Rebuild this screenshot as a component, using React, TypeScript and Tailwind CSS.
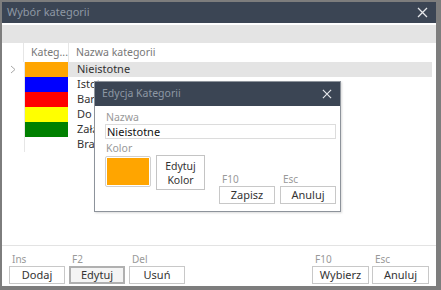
import React from "react";

const font = { fontFamily: '"Segoe UI", "Noto Sans", "Open Sans", sans-serif' };

function CloseX({ size = 11 }: { size?: number }) {
  return (
    <svg width={size} height={size} viewBox="0 0 11 11">
      <path d="M1 1 L10 10 M10 1 L1 10" stroke="#e6e8eb" strokeWidth="1.3" fill="none" />
    </svg>
  );
}

function Btn({ label, w, focused }: { label: string; w: string; focused?: boolean }) {
  return (
    <div
      className={`${w} h-[18px] flex items-center justify-center text-[11px] text-[#333] ${
        focused ? "border-2 border-[#b0b0b0] bg-[#f4f4f4]" : "border border-[#c8c8c8] bg-white"
      }`}
    >
      {label}
    </div>
  );
}

function KeyBtn({ k, label, w, focused }: { k: string; label: string; w: string; focused?: boolean }) {
  return (
    <div className="flex flex-col">
      <div className="text-[10px] leading-[12px] text-[#999] pl-[3px] h-[13px]">{k}</div>
      <Btn label={label} w={w} focused={focused} />
    </div>
  );
}

const rows = [
  { c: "#ffa500", t: "Nieistotne", sel: true },
  { c: "#0000ff", t: "Istot" },
  { c: "#ff0000", t: "Bard" },
  { c: "#ffff00", t: "Do z" },
  { c: "#008000", t: "Załą" },
  { c: "#ffffff", t: "Brak" },
];

export default function App() {
  return (
    <div className="relative w-[441px] h-[290px] bg-[#7d7d7d] pl-[2px] pt-[2px] pr-[5px] pb-[4px]" style={font}>
      <div className="w-full h-full bg-white flex flex-col">
        {/* title bar */}
        <div className="h-[21px] bg-[#3b4554] flex items-center justify-between pl-[5px] pr-[8px]">
          <span className="text-[11px] text-[#8e98a4]">Wybór kategorii</span>
          <CloseX size={11} />
        </div>
        <div className="h-[2px] bg-white" />
        <div className="h-[18px] bg-[#e4e4e4]" />
        {/* grid */}
        <div className="flex-1 flex flex-col">
          <div className="h-[19px] flex text-[10.5px] text-[#777] items-center">
            <div className="w-[21px] h-full" />
            <div className="w-[45px] h-full border-l border-[#e6e6e6] flex items-center pl-[7px]">Kateg...</div>
            <div className="flex-1 h-full border-l border-[#e6e6e6] flex items-center pl-[7px]">Nazwa kategorii</div>
          </div>
          {rows.map((r, i) => (
            <div key={i} className="h-[15px] flex">
              <div className="w-[22px] flex items-center justify-center">
                {r.sel ? (
                  <svg width="6" height="9" viewBox="0 0 6 9">
                    <path d="M1 1 L5 4.5 L1 8" stroke="#a8a8a8" strokeWidth="1" fill="none" />
                  </svg>
                ) : null}
              </div>
              <div className="w-[44px] border-l border-[#e6e6e6]" style={{ backgroundColor: r.c }} />
              <div
                className={`flex-1 flex items-center pl-[9px] text-[11px] text-[#333] mr-[4px] ${
                  r.sel ? "bg-[#e4e4e4]" : ""
                }`}
              >
                {r.t}
              </div>
            </div>
          ))}
          <div className="flex-1" />
        </div>
        {/* bottom bar */}
        <div className="h-[41px] border-t border-[#e3e3e3] flex items-start pt-[7px] px-[7px] justify-between">
          <div className="flex gap-[4px]">
            <KeyBtn k="Ins" label="Dodaj" w="w-[56px]" />
            <KeyBtn k="F2" label="Edytuj" w="w-[56px]" focused />
            <KeyBtn k="Del" label="Usuń" w="w-[56px]" />
          </div>
          <div className="flex gap-[3px]">
            <KeyBtn k="F10" label="Wybierz" w="w-[57px]" />
            <KeyBtn k="Esc" label="Anuluj" w="w-[57px]" />
          </div>
        </div>
      </div>

      {/* edit dialog */}
      <div className="absolute left-[94px] top-[81px] w-[247px] h-[131px] border border-[#8d939b] bg-white flex flex-col shadow-[1px_1px_2px_rgba(0,0,0,0.15)]">
        <div className="h-[24px] bg-[#3b4554] flex items-center justify-between pl-[7px] pr-[8px]">
          <span className="text-[10.5px] text-[#8e98a4]">Edycja Kategorii</span>
          <CloseX size={10} />
        </div>
        <div className="flex-1 pl-[10px] pr-[4px] pt-[5px] flex flex-col">
          <div className="text-[10.5px] leading-[13px] text-[#999] pl-[1px]">Nazwa</div>
          <div className="h-[15px] border border-[#dcdcdc] text-[11px] leading-[13px] text-[#111] pl-[1px] flex items-center">
            Nieistotne
          </div>
          <div className="text-[10.5px] leading-[13px] text-[#999] pl-[1px] mt-[3px]">Kolor</div>
          <div className="flex items-start">
            <div className="w-[46px] h-[31px] border border-[#d0d0d0] p-[1px] bg-white rounded-[2px] mt-[1px]">
              <div className="w-full h-full bg-[#ffa500]" />
            </div>
            <div className="ml-[5px] w-[49px] h-[35px] border border-[#c4c4c4] flex flex-col items-center justify-center text-[10.5px] leading-[14px] text-[#333]">
              <span>Edytuj</span>
              <span>Kolor</span>
            </div>
            <div className="flex-1 flex justify-end gap-[5px] mt-[18px]">
              <KeyBtn k="F10" label="Zapisz" w="w-[56px]" />
              <KeyBtn k="Esc" label="Anuluj" w="w-[56px]" />
            </div>
          </div>
        </div>
      </div>
    </div>
  );
}
